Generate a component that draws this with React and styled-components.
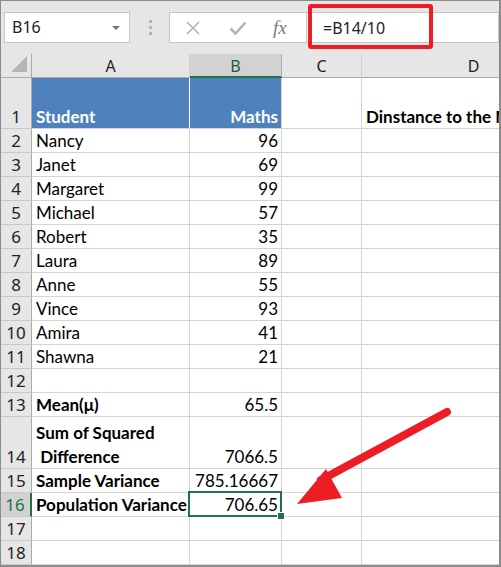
import styled, { createGlobalStyle } from "styled-components"

const GlobalStyle = createGlobalStyle`
  html, body { margin: 0; padding: 0; background: #fff; }
  body { font-family: Lato, "Open Sans", sans-serif; }
`

const GREEN = "#217346"
const GRID = "#d4d4d4"

const rows = [
    { n: 1, h: 51, a: "Student", b: "Maths", d: "Dinstance to the Mean", head: true },
    { n: 2, a: "Nancy", b: "96" },
    { n: 3, a: "Janet", b: "69" },
    { n: 4, a: "Margaret", b: "99" },
    { n: 5, a: "Michael", b: "57" },
    { n: 6, a: "Robert", b: "35" },
    { n: 7, a: "Laura", b: "89" },
    { n: 8, a: "Anne", b: "55" },
    { n: 9, a: "Vince", b: "93" },
    { n: 10, a: "Amira", b: "41" },
    { n: 11, a: "Shawna", b: "21" },
    { n: 12 },
    { n: 13, a: "Mean(μ)", b: "65.5", bold: true },
    { n: 14, h: 52, a: ["Sum of Squared", "\u00a0Difference"], b: "7066.5", bold: true },
    { n: 15, a: "Sample Variance", b: "785.16667", bold: true },
    { n: 16, a: "Population Variance", b: "706.65", bold: true, selected: true },
    { n: 17 },
    { n: 18 },
]

const App = () => {
    return (
        <>
            <GlobalStyle />
            <Frame>
                <FormulaBar>
                    <NameBox>
                        B16
                        <Caret />
                    </NameBox>
                    <Grip>
                        <i /><i /><i />
                    </Grip>
                    <ButtonBox>
                        <svg width="16" height="16" viewBox="0 0 16 16">
                            <path d="M2 2 L14 14 M14 2 L2 14" stroke="#b3b3b3" strokeWidth="1.6" fill="none" />
                        </svg>
                        <svg width="18" height="16" viewBox="0 0 18 16">
                            <path d="M1.5 8.5 L6.5 13.5 L16.5 2.5" stroke="#b3b3b3" strokeWidth="2.6" fill="none" />
                        </svg>
                        <Fx>fx</Fx>
                    </ButtonBox>
                    <FormulaInput>=B14/10</FormulaInput>
                    <Highlight />
                </FormulaBar>

                <Sheet>
                    <Corner>
                        <svg width="17" height="17" viewBox="0 0 17 17">
                            <polygon points="16,0 16,16 0,16" fill="#b5b5b5" />
                        </svg>
                    </Corner>
                    <ColHead>A</ColHead>
                    <ColHead $active>B</ColHead>
                    <ColHead>C</ColHead>
                    <ColHead>D</ColHead>

                    {rows.map((r) => (
                        <Row key={r.n} $h={r.h || 24}>
                            <RowHead $active={r.selected}>{r.n}</RowHead>
                            <Cell $head={r.head} $bold={r.bold || r.head} $sep={r.head}>
                                {Array.isArray(r.a) ? (
                                    <Lines>{r.a.map((l) => <span key={l}>{l}</span>)}</Lines>
                                ) : r.a}
                            </Cell>
                            <Cell $head={r.head} $bold={r.head} $right $selected={r.selected}>
                                {r.b}
                                {r.selected && <Handle />}
                            </Cell>
                            <Cell />
                            <Cell $bold $overflow>{r.d}</Cell>
                        </Row>
                    ))}
                </Sheet>

                <Arrow width="180" height="110" viewBox="0 0 180 110">
                    <line x1="166" y1="10" x2="40" y2="78" stroke="#ee1c25" strokeWidth="8" strokeLinecap="round" />
                    <polygon points="16,102 45,67 61,96" fill="#ee1c25" />
                </Arrow>
            </Frame>
        </>
    )
}

export default App

const Frame = styled.div`
    position: relative;
    width: 501px;
    height: 567px;
    border: 1px solid #8c8c8c;
    border-bottom-width: 2px;
    border-right-width: 2px;
    box-sizing: border-box;
    overflow: hidden;
    background: #fff;
`
const FormulaBar = styled.div`
    position: relative;
    height: 53px;
    background: #e6e6e6;
    display: flex;
    align-items: flex-start;
    padding: 11px 0 0 3px;
    box-sizing: border-box;
`
const NameBox = styled.div`
    position: relative;
    width: 126px;
    height: 31px;
    box-sizing: border-box;
    background: #fff;
    border: 1px solid #c6c6c6;
    font: 16px "Noto Sans", sans-serif;
    color: #222;
    padding-left: 7px;
    line-height: 29px;
`
const Caret = styled.span`
    position: absolute;
    right: 9px;
    top: 13px;
    border-left: 4px solid transparent;
    border-right: 4px solid transparent;
    border-top: 4px solid #777;
`
const Grip = styled.div`
    width: 38px;
    height: 31px;
    display: flex;
    flex-direction: column;
    align-items: center;
    justify-content: center;
    gap: 3px;
    padding-left: 1px;

    i {
        width: 3px;
        height: 3px;
        background: #b4b4b4;
    }
`
const ButtonBox = styled.div`
    width: 137px;
    height: 31px;
    box-sizing: border-box;
    background: #fff;
    border: 1px solid #c6c6c6;
    border-right: none;
    display: flex;
    align-items: center;
    gap: 28px;
    padding-left: 15px;
`
const Fx = styled.span`
    font: italic 19px "Liberation Serif", serif;
    color: #7b7b7b;
    margin-left: -2px;
`
const FormulaInput = styled.div`
    flex: 1;
    height: 31px;
    box-sizing: border-box;
    background: #fff;
    border: 1px solid #c6c6c6;
    font: 16px "Noto Sans", sans-serif;
    color: #222;
    padding-left: 16px;
    line-height: 30px;
`
const Highlight = styled.div`
    position: absolute;
    left: 307px;
    top: 3px;
    width: 125px;
    height: 45px;
    box-sizing: border-box;
    border: 4px solid #ee1c25;
    border-radius: 3px;
`
const Sheet = styled.div`
    display: grid;
    grid-template-columns: 31px 158px 92px 80px 224px;
    grid-auto-rows: auto;
    font-family: Lato, "Open Sans", sans-serif;
    font-size: 17px;
    color: #000;
`
const Corner = styled.div`
    height: 24px;
    box-sizing: border-box;
    background: #e6e6e6;
    border-right: 1px solid #ababab;
    border-bottom: 1px solid #ababab;
    display: flex;
    align-items: flex-end;
    justify-content: flex-end;
    padding: 0 3px 4px 0;
`
const ColHead = styled.div`
    height: 24px;
    box-sizing: border-box;
    background: ${(p) => (p.$active ? "#d2d2d2" : "#e6e6e6")};
    color: ${(p) => (p.$active ? "#1e5e3a" : "#222")};
    border-right: 1px solid ${(p) => (p.$active ? "#ababab" : "#d0d0d0")};
    border-bottom: ${(p) => (p.$active ? `2px solid ${GREEN}` : "1px solid #ababab")};
    font: 16px "Noto Sans", sans-serif;
    display: flex;
    align-items: center;
    justify-content: center;
    padding-top: 1px;
`
const Row = styled.div`
    display: contents;

    & > * {
        height: ${(p) => p.$h}px;
    }
`
const RowHead = styled.div`
    box-sizing: border-box;
    background: ${(p) => (p.$active ? "#d2d2d2" : "#e6e6e6")};
    color: ${(p) => (p.$active ? GREEN : "#222")};
    border-right: ${(p) => (p.$active ? `2px solid ${GREEN}` : "1px solid #ababab")};
    border-bottom: 1px solid #c8c8c8;
    font: 17px "Noto Sans", sans-serif;
    display: flex;
    align-items: flex-end;
    justify-content: center;
    padding: 0 ${(p) => (p.$active ? "1px" : "0")} 0 0;
    line-height: 23px;
`
const Cell = styled.div`
    position: relative;
    box-sizing: border-box;
    background: ${(p) => (p.$head ? "#4f81bd" : "#fff")};
    color: ${(p) => (p.$head ? "#fff" : "#000")};
    font-weight: ${(p) => (p.$bold ? 700 : 400)};
    border-right: 1px solid ${(p) => (p.$sep ? "#fff" : GRID)};
    border-bottom: 1px solid ${GRID};
    display: flex;
    align-items: flex-end;
    justify-content: ${(p) => (p.$right ? "flex-end" : "flex-start")};
    padding: 0 3px 0 4px;
    line-height: 23px;
    white-space: nowrap;
    overflow: ${(p) => (p.$overflow ? "hidden" : "visible")};

    ${(p) => p.$selected && `
        &::after {
            content: "";
            position: absolute;
            left: -2px;
            top: -2px;
            right: -1px;
            bottom: -1px;
            border: 2px solid ${GREEN};
            pointer-events: none;
        }
    `}
`
const Handle = styled.span`
    position: absolute;
    right: -4px;
    bottom: -4px;
    width: 6px;
    height: 6px;
    background: ${GREEN};
    border: 1px solid #fff;
    z-index: 1;
`
const Lines = styled.div`
    display: flex;
    flex-direction: column;
    line-height: 24px;
    margin-bottom: -1px;
`
const Arrow = styled.svg`
    position: absolute;
    left: 280px;
    top: 401px;
`
